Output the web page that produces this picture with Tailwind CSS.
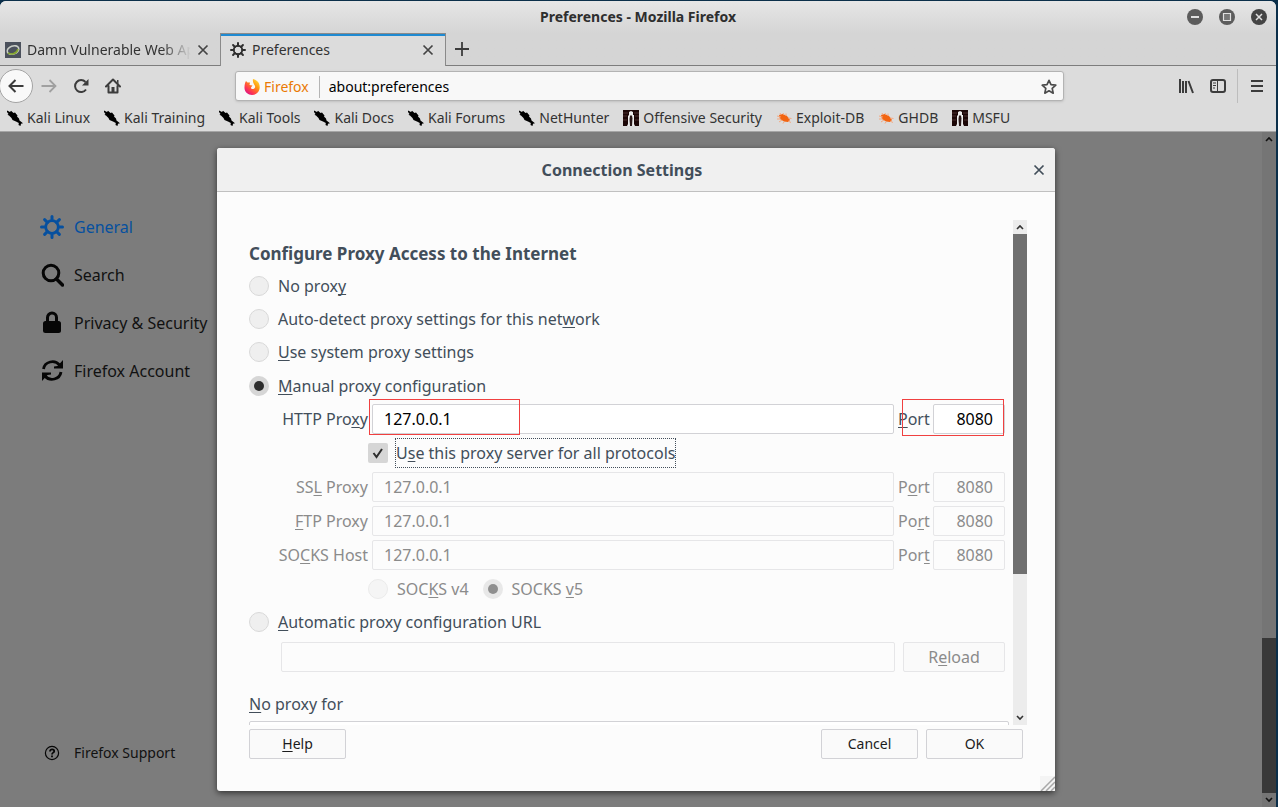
<!DOCTYPE html>
<html lang="en">
<head>
<meta charset="utf-8">
<title>Preferences - Mozilla Firefox</title>
<script src="https://cdn.jsdelivr.net/npm/@tailwindcss/browser@4"></script>
</head>
<body class="h-screen overflow-hidden bg-[#0b2f4a] pt-px pr-0.5 font-['Noto_Sans',sans-serif] text-sm text-[#333]">
<svg class="hidden">
  <symbol id="gear" viewBox="0 0 24 24"><circle cx="12" cy="12" r="6.3" fill="none" stroke="currentColor" stroke-width="2.8"/><path d="M12 1.500v4M12 18.500v4M1.500 12h4M18.500 12h4M4.600 4.600l2.800 2.800M16.600 16.600l2.800 2.800M4.600 19.400l2.800-2.800M16.600 7.400l2.800-2.800" stroke="currentColor" stroke-width="3" stroke-linecap="round"/></symbol>
  <symbol id="kali" viewBox="0 0 16 16"><path d="M0 .5L3 2l1-1.200L6.500 3 8 2.500l2.500 3-.5 1L12 8.500l.5 2 3.500 2.800-2 .4-.5 2.300-2-1 .3-2L9 11.500 5.500 10 4.500 8 2 5.500.5 4.800 1.500 4 0 2z" fill="#000"/></symbol>
  <symbol id="offsec" viewBox="0 0 16 16"><path d="M0 0h16v16H0z" fill="#1c0707"/><path d="M0 3h5M11 3h5M0 6h4M12 6h4M0 10h4M12 10h4" stroke="#4d3030"/><path d="M6 2l2-1 2 1v3h1v9l1 2H4l1-2V6l1-1z" fill="#ececec"/><path d="M7 5.500h2l.5 3L9 16H7l-.500-7z" fill="#2a1818"/></symbol>
  <symbol id="bug" viewBox="0 0 16 16"><path d="M3 5l3.500-1L11 6l3 4-2 2-4-.5L4 9z" fill="#f26411"/><path d="M1 6l4 1M1 9h4M3 12l3-2M7 3l1 2M10 3.500V6M8 12l-1 1.500M12 11l3 1.500M12 8l3.500.5M4 3l1 2" stroke="#f7a274" stroke-width=".9"/></symbol>
  <symbol id="cross" viewBox="0 0 12 12"><path d="M1.500 1.500l9 9M10.500 1.500l-9 9" stroke="currentColor" stroke-width="1.700"/></symbol>
  <symbol id="up" viewBox="0 0 8 6"><path d="M1 5l3-3 3 3" fill="none" stroke="currentColor" stroke-width="1.600"/></symbol>
  <symbol id="down" viewBox="0 0 8 6"><path d="M1 1l3 3 3-3" fill="none" stroke="currentColor" stroke-width="1.600"/></symbol>
</svg>
<div class="flex h-full flex-col overflow-hidden rounded-t-md bg-[#dcdcdc]">
  <header class="bg-linear-to-b from-[#e6e6e6] to-[#d5d5d5] to-50%">
    <div class="grid h-8 grid-cols-[1fr_auto_1fr] items-center">
      <span></span>
      <h1 class="font-bold text-[#2e2e2e]">Preferences - Mozilla Firefox</h1>
      <div class="flex justify-end gap-4 pr-[9px]">
        <button aria-label="Minimize"><svg class="size-4" viewBox="0 0 16 16"><circle cx="8" cy="8" r="8" fill="#5c5c5c"/><path d="M4 8h8" stroke="#e0e0e0" stroke-width="2"/></svg></button>
        <button aria-label="Maximize"><svg class="size-4" viewBox="0 0 16 16"><circle cx="8" cy="8" r="8" fill="#5c5c5c"/><path d="M4.500 4.500h7v7h-7z" fill="#777" stroke="#e0e0e0" stroke-width="1.200"/></svg></button>
        <button aria-label="Close"><svg class="size-4" viewBox="0 0 16 16"><circle cx="8" cy="8" r="8" fill="#444"/><path d="M5 5l6 6M11 5l-6 6" stroke="#e0e0e0" stroke-width="1.500"/></svg></button>
      </div>
    </div>
    <div class="flex h-[33px]">
      <div class="flex w-[220px] items-center border-b border-[#7d7d7d] pt-px pl-[5px]">
        <svg class="mr-1.5 size-4 shrink-0" viewBox="0 0 16 16"><path d="M0 0h16v16H0z" fill="#4b515c"/><ellipse cx="8" cy="8" rx="6" ry="4" transform="rotate(-20 8 8)" fill="none" stroke="#c9cdc6" stroke-width="1.600"/><path d="M3 11c3 2 9 1 10-4" fill="none" stroke="#83a52e" stroke-width="1.600"/></svg>
        <span class="w-[164px] overflow-hidden whitespace-nowrap [mask-image:linear-gradient(to_right,black_82%,transparent)]">Damn Vulnerable Web App</span>
        <button class="ml-1.5" aria-label="Close tab"><svg class="size-3 text-[#444]"><use href="#cross"/></svg></button>
      </div>
      <div class="flex w-[226px] items-center border-x border-t border-[#8a8a8a] bg-[#dcdcdc] px-2 shadow-[inset_0_2px_0_#1f8ad2]">
        <svg class="mr-1.5 ml-px size-4 text-[#2e2e2e]"><use href="#gear"/></svg>
        <span class="flex-1">Preferences</span>
        <button class="mr-[3px]" aria-label="Close tab"><svg class="size-3 text-[#444]"><use href="#cross"/></svg></button>
      </div>
      <div class="flex flex-1 items-center border-b border-[#7d7d7d] pl-2">
        <button aria-label="New tab"><svg class="size-4" viewBox="0 0 16 16"><path d="M8 1v14M1 8h14" stroke="#3c3c3c" stroke-width="1.800"/></svg></button>
      </div>
    </div>
  </header>
  <nav class="flex h-10 items-center">
    <div class="flex w-[235px] items-center gap-4 text-[#3c3c3c]">
      <button class="-ml-px grid size-[34px] place-items-center rounded-full border border-[#a3a3a3] bg-[#f9f9f9]" aria-label="Back"><svg class="size-4" viewBox="0 0 16 16"><path d="M15.500 8H2M7.500 2L1.500 8l6 6" fill="none" stroke="currentColor" stroke-width="2"/></svg></button>
      <button class="-ml-2 text-[#a0a0a0]" aria-label="Forward"><svg class="size-4" viewBox="0 0 16 16"><path d="M.5 8H14M8.500 2l6 6-6 6" fill="none" stroke="currentColor" stroke-width="1.800"/></svg></button>
      <button aria-label="Reload page"><svg class="size-4" viewBox="0 0 16 16"><path d="M13 11.500A6 6 0 1 1 12.500 4" fill="none" stroke="currentColor" stroke-width="2"/><path d="M15.500 1v6.500H9z" fill="currentColor"/></svg></button>
      <button aria-label="Home"><svg class="size-4" viewBox="0 0 16 16"><path d="M1 8.500L8 1.500l7 7M3.500 8v6.500h9V8" fill="none" stroke="currentColor" stroke-width="2" stroke-linejoin="round" stroke-linecap="round"/><path d="M6.500 9h3v5h-3zM12 2h1.500v4L12 4.500z" fill="currentColor"/></svg></button>
    </div>
    <div class="flex h-[30px] w-[829px] items-center rounded-[3px] border border-[#b3b3b3] bg-[#f8f8f8] px-2 pt-px shadow-sm">
      <svg class="mr-1 size-4" viewBox="0 0 16 16"><defs><linearGradient id="fx" x1="1" y1="0" x2="0.200" y2="1"><stop offset="0" stop-color="#fff04a"/><stop offset=".4" stop-color="#ff980e"/><stop offset=".75" stop-color="#ff3750"/><stop offset="1" stop-color="#d6118c"/></linearGradient></defs><path d="M2 2l1.500 1.500L6 3.500 5.500 6l3 .6L7 8.500c0 2 3 2 4 0C12 6 8 5 9 0c4 1 7 4 6.700 8.500C15.500 13 12 16 8 16S0 13 .5 8C.6 5.500 1 3.500 2 2z" fill="url(#fx)"/></svg>
      <span class="text-[#ea7a05]">Firefox</span>
      <span class="mr-[9px] ml-2.5 h-[22px] w-px bg-[#b5b5b5]"></span>
      <input aria-label="Address" class="min-w-0 flex-1 bg-transparent text-black outline-none" value="about:preferences">
      <button aria-label="Bookmark this page"><svg class="-mr-0.5 size-4" viewBox="0 0 16 16"><path d="M8 1.300l2 4.400 4.800.5-3.600 3.200 1 4.800L8 11.800l-4.200 2.400 1-4.800L1.200 6.200l4.800-.5z" fill="none" stroke="#4c4c4c" stroke-width="1.700" stroke-linejoin="round"/></svg></button>
    </div>
    <div class="ml-auto flex items-center text-[#3c3c3c]">
      <button aria-label="Library"><svg class="mr-4 size-4" viewBox="0 0 16 16"><path d="M2 1v14M5 3v12M8 3v12M10.500 3l4.500 12" stroke="currentColor" stroke-width="2"/></svg></button>
      <button aria-label="Sidebars"><svg class="mr-[11px] size-4" viewBox="0 0 16 16"><rect x="1" y="2" width="14" height="12" rx="2" fill="none" stroke="currentColor" stroke-width="2"/><path d="M7.500 2v12M3 5h3M3 7.500h3M3 10h2" stroke="currentColor"/></svg></button>
      <span class="h-[34px] w-px bg-[#bdbdbd]"></span>
      <button aria-label="Menu"><svg class="mx-[11px] size-4" viewBox="0 0 16 16"><path d="M2 3h12M2 8h12M2 13h12" stroke="currentColor" stroke-width="2"/></svg></button>
    </div>
  </nav>
  <div class="flex h-[26px] items-center gap-3.5 border-b border-[#a5a5a5] pb-px pl-[7px] whitespace-nowrap">
    <a href="#" class="flex items-center gap-1"><svg class="size-4"><use href="#kali"/></svg>Kali Linux</a>
    <a href="#" class="flex items-center gap-1"><svg class="size-4"><use href="#kali"/></svg>Kali Training</a>
    <a href="#" class="flex items-center gap-1"><svg class="size-4"><use href="#kali"/></svg>Kali Tools</a>
    <a href="#" class="flex items-center gap-1"><svg class="size-4"><use href="#kali"/></svg>Kali Docs</a>
    <a href="#" class="flex items-center gap-1"><svg class="size-4"><use href="#kali"/></svg>Kali Forums</a>
    <a href="#" class="flex items-center gap-1"><svg class="size-4"><use href="#kali"/></svg>NetHunter</a>
    <a href="#" class="flex items-center gap-1"><svg class="size-4"><use href="#offsec"/></svg>Offensive Security</a>
    <a href="#" class="flex items-center gap-1"><svg class="size-4"><use href="#bug"/></svg>Exploit-DB</a>
    <a href="#" class="flex items-center gap-1"><svg class="size-4"><use href="#bug"/></svg>GHDB</a>
    <a href="#" class="flex items-center gap-1"><svg class="size-4"><use href="#offsec"/></svg>MSFU</a>
  </div>

  <div class="relative flex min-h-0 flex-1 bg-[#7c7c7c]">
    <aside class="flex flex-1 flex-col items-start pt-[71px] pb-11 pl-10 text-base text-[#111]">
      <a href="#" class="flex h-12 items-center gap-2.5 text-[#06509f]"><svg class="size-6"><use href="#gear"/></svg>General</a>
      <a href="#" class="flex h-12 items-center gap-2.5"><svg class="size-6" viewBox="0 0 24 24"><circle cx="11" cy="10" r="7.800" fill="none" stroke="#060606" stroke-width="3"/><path d="M16.500 16l6 6" stroke="#060606" stroke-width="3.500" stroke-linecap="round"/></svg>Search</a>
      <a href="#" class="flex h-12 items-center gap-2.5"><svg class="size-6" viewBox="0 0 24 24"><rect x="3" y="10" width="18" height="12" rx="2.500" fill="#060606"/><path d="M7.500 12V6.500a4.500 4.500 0 0 1 9 0V12" fill="none" stroke="#060606" stroke-width="3"/></svg>Privacy &amp; Security</a>
      <a href="#" class="flex h-12 items-center gap-2.5"><svg class="size-6" viewBox="0 0 24 24"><path d="M3.500 10a9 8.500 0 0 1 16-4M21 13a9 8.500 0 0 1-16 4" fill="none" stroke="#060606" stroke-width="2.800"/><path d="M23 1v8.500h-9V7.500l3.500-.5zM2 22v-8.500h9v2l-3.500.5z" fill="#060606"/></svg>Firefox Account</a>
      <a href="#" class="mt-auto flex items-center gap-2.5 text-sm"><span class="grid w-6 place-items-center"><svg class="size-4" viewBox="0 0 16 16"><circle cx="8" cy="8" r="6.600" fill="none" stroke="#060606" stroke-width="1.200"/><path d="M6 6.500c0-3 4.200-2.600 4.200-.3C10.200 7.700 8 7.600 8 9.400M8 10.600v1.600" fill="none" stroke="#060606" stroke-width="1.800"/></svg></span>Firefox Support</a>
    </aside>
    <div class="flex w-3.5 flex-col items-center bg-[#757575] text-[#111]">
      <svg class="my-1 h-1.5 w-2"><use href="#up"/></svg>
      <div class="mt-auto h-[155px] w-full bg-[#383838]"></div>
      <svg class="my-1 h-1.5 w-2"><use href="#down"/></svg>
    </div>

    <div class="absolute inset-0 flex items-start justify-center pt-4 pr-1">
      <section role="dialog" aria-labelledby="dlg" class="relative w-[838px] rounded-[3px] bg-[#fcfcfc] text-base text-[#424e5a] shadow-[0_2px_6px_rgba(0,0,0,0.6)]">
        <div class="grid h-11 grid-cols-[1fr_auto_1fr] items-center rounded-t-[3px] border-b border-[#c0c0c0] bg-[#f0f0f0]">
          <span></span>
          <h2 id="dlg" class="pr-7 text-base font-bold">Connection Settings</h2>
          <button class="mr-2.5 justify-self-end" aria-label="Close dialog"><svg class="size-3"><use href="#cross"/></svg></button>
        </div>
        <form class="px-8 pt-7 pb-8">
          <div class="-mr-1 flex h-[505px] overflow-hidden">
            <div class="flex-1 pt-[18px] pr-1">
              <h3 class="h-[31px] pt-1 text-[17px] leading-6 font-bold">Configure Proxy Access to the Internet</h3>
              <div class="mr-1">
                <label class="flex h-[33px] items-center gap-[9px]"><input type="radio" name="mode" class="size-5 appearance-none rounded-full border border-[#d9d9d9] bg-[#efefef]"><span>No prox<u class="underline-offset-2 [text-decoration-skip-ink:none]">y</u></span></label>
                <label class="flex h-[33px] items-center gap-[9px]"><input type="radio" name="mode" class="size-5 appearance-none rounded-full border border-[#d9d9d9] bg-[#efefef]"><span>Auto-detect proxy settings for this net<u class="underline-offset-2 [text-decoration-skip-ink:none]">w</u>ork</span></label>
                <label class="flex h-[34px] items-center gap-[9px]"><input type="radio" name="mode" class="size-5 appearance-none rounded-full border border-[#d9d9d9] bg-[#efefef]"><span><u class="underline-offset-2 [text-decoration-skip-ink:none]">U</u>se system proxy settings</span></label>
                <label class="flex h-[33px] items-center gap-[9px]"><input type="radio" name="mode" checked class="grid size-5 appearance-none place-items-center rounded-full bg-[#d6d6d6] before:size-2.5 before:rounded-full before:bg-[#2d2d2d]"><span><u class="underline-offset-2 [text-decoration-skip-ink:none]">M</u>anual proxy configuration</span></label>
                <div class="relative flex h-[34px] items-center gap-1">
                  <label for="http" class="w-[119px] text-right">HTTP Pro<u class="underline-offset-2 [text-decoration-skip-ink:none]">x</u>y</label>
                  <input id="http" value="127.0.0.1" class="h-[30px] min-w-0 flex-1 rounded-xs border border-[#d2d2d6] bg-white px-[11px] text-black outline-none">
                  <label for="httpp" class="w-[31px]"><u class="underline-offset-2 [text-decoration-skip-ink:none]">P</u>ort</label>
                  <input id="httpp" value="8080" class="h-[30px] w-[72px] rounded-xs border border-[#d2d2d6] bg-white px-[11px] text-right text-black outline-none">
                  <span class="pointer-events-none absolute -top-[3px] left-[120px] h-9 w-[151px] border border-[#f04040]"></span>
                  <span class="pointer-events-none absolute -top-[3px] right-px h-[37px] w-[102px] border border-[#f04040]"></span>
                </div>
                <div class="flex h-[34px] items-center pl-[119px]">
                  <label class="flex items-center gap-[7px]">
                    <span class="grid place-items-center"><input type="checkbox" checked class="col-start-1 row-start-1 size-5 appearance-none rounded-xs bg-[#d6d6d6]"><svg class="col-start-1 row-start-1 size-3" viewBox="0 0 12 12"><path d="M1.500 6l3 4 5.500-8" fill="none" stroke="#2d2d2d" stroke-width="2"/></svg></span>
                    <span class="border border-dotted border-[#424e5a] leading-7">U<u class="underline-offset-2 [text-decoration-skip-ink:none]">s</u>e this proxy server for all protocols</span>
                  </label>
                </div>
                <div class="flex h-[34px] items-center gap-1 text-[#8b8b8b]">
                  <label for="ssl" class="w-[119px] text-right">SS<u class="underline-offset-2 [text-decoration-skip-ink:none]">L</u> Proxy</label>
                  <input id="ssl" disabled value="127.0.0.1" class="h-[30px] min-w-0 flex-1 rounded-xs border border-[#e6e6e8] px-[11px]">
                  <label for="sslp" class="w-[31px]">P<u class="underline-offset-2 [text-decoration-skip-ink:none]">o</u>rt</label>
                  <input id="sslp" disabled value="8080" class="h-[30px] w-[72px] rounded-xs border border-[#e6e6e8] px-[11px] text-right">
                </div>
                <div class="flex h-[34px] items-center gap-1 text-[#8b8b8b]">
                  <label for="ftp" class="w-[119px] text-right"><u class="underline-offset-2 [text-decoration-skip-ink:none]">F</u>TP Proxy</label>
                  <input id="ftp" disabled value="127.0.0.1" class="h-[30px] min-w-0 flex-1 rounded-xs border border-[#e6e6e8] px-[11px]">
                  <label for="ftpp" class="w-[31px]">Po<u class="underline-offset-2 [text-decoration-skip-ink:none]">r</u>t</label>
                  <input id="ftpp" disabled value="8080" class="h-[30px] w-[72px] rounded-xs border border-[#e6e6e8] px-[11px] text-right">
                </div>
                <div class="flex h-[34px] items-center gap-1 text-[#8b8b8b]">
                  <label for="socks" class="w-[119px] text-right">SO<u class="underline-offset-2 [text-decoration-skip-ink:none]">C</u>KS Host</label>
                  <input id="socks" disabled value="127.0.0.1" class="h-[30px] min-w-0 flex-1 rounded-xs border border-[#e6e6e8] px-[11px]">
                  <label for="socksp" class="w-[31px]">Por<u class="underline-offset-2 [text-decoration-skip-ink:none]">t</u></label>
                  <input id="socksp" disabled value="8080" class="h-[30px] w-[72px] rounded-xs border border-[#e6e6e8] px-[11px] text-right">
                </div>
                <div class="flex h-[33px] items-center gap-3.5 pl-[119px] text-[#8b8b8b]">
                  <label class="flex items-center gap-[9px]"><input type="radio" name="v" disabled class="size-5 appearance-none rounded-full border border-[#ebebeb] bg-[#f5f5f5]"><span>SOC<u class="underline-offset-2 [text-decoration-skip-ink:none]">K</u>S v4</span></label>
                  <label class="flex items-center gap-[9px]"><input type="radio" name="v" disabled checked class="grid size-5 appearance-none place-items-center rounded-full bg-[#e8e8e8] before:size-2.5 before:rounded-full before:bg-[#8f8f8f]"><span>SOCKS <u class="underline-offset-2 [text-decoration-skip-ink:none]">v</u>5</span></label>
                </div>
                <label class="flex h-[33px] items-center gap-[9px]"><input type="radio" name="mode" class="size-5 appearance-none rounded-full border border-[#d9d9d9] bg-[#efefef]"><span><u class="underline-offset-2 [text-decoration-skip-ink:none]">A</u>utomatic proxy configuration URL</span></label>
                <div class="flex h-[38px] items-center gap-2 pl-8">
                  <input aria-label="Automatic proxy configuration URL" disabled class="h-[30px] min-w-0 flex-1 rounded-xs border border-[#e6e6e8]">
                  <button type="button" disabled class="h-[30px] w-[102px] rounded-xs border border-[#e6e6e8] bg-[#fafafa] text-[#8b8b8b]">R<u class="underline-offset-2 [text-decoration-skip-ink:none]">e</u>load</button>
                </div>
              </div>
              <label for="noproxy" class="mt-4 block h-[29px]"><u class="underline-offset-2 [text-decoration-skip-ink:none]">N</u>o proxy for</label>
              <textarea id="noproxy" class="block h-20 w-full resize-none rounded-xs border border-[#d2d2d6] bg-white"></textarea>
            </div>
            <div class="flex w-3.5 flex-col items-center bg-[#ececec] text-[#333]">
              <svg class="my-1 h-1.5 w-2"><use href="#up"/></svg>
              <div class="h-[340px] w-full bg-[#707070]"></div>
              <svg class="mt-auto mb-1 h-1.5 w-2"><use href="#down"/></svg>
            </div>
          </div>
          <div class="mt-1 flex gap-2 text-sm text-[#1c1c1c]">
            <button type="button" class="mr-auto h-[30px] w-[97px] rounded-xs border border-[#d2d2d6] bg-[#fafafa]"><u class="underline-offset-2 [text-decoration-skip-ink:none]">H</u>elp</button>
            <button type="button" class="h-[30px] w-[97px] rounded-xs border border-[#d2d2d6] bg-[#fafafa]">Cancel</button>
            <button type="button" class="h-[30px] w-[97px] rounded-xs border border-[#d2d2d6] bg-[#fafafa]">OK</button>
          </div>
        </form>
        <svg class="absolute right-0 bottom-0 size-[15px]" viewBox="0 0 15 15"><path d="M0 0h15v15H0z" fill="#f4f4f4"/><path d="M1 15L15 1M6 15l9-9M11 15l4-4" stroke="#a8a8a8" stroke-width="1.500"/></svg>
      </section>
    </div>
  </div>
</div>
</body>
</html>
